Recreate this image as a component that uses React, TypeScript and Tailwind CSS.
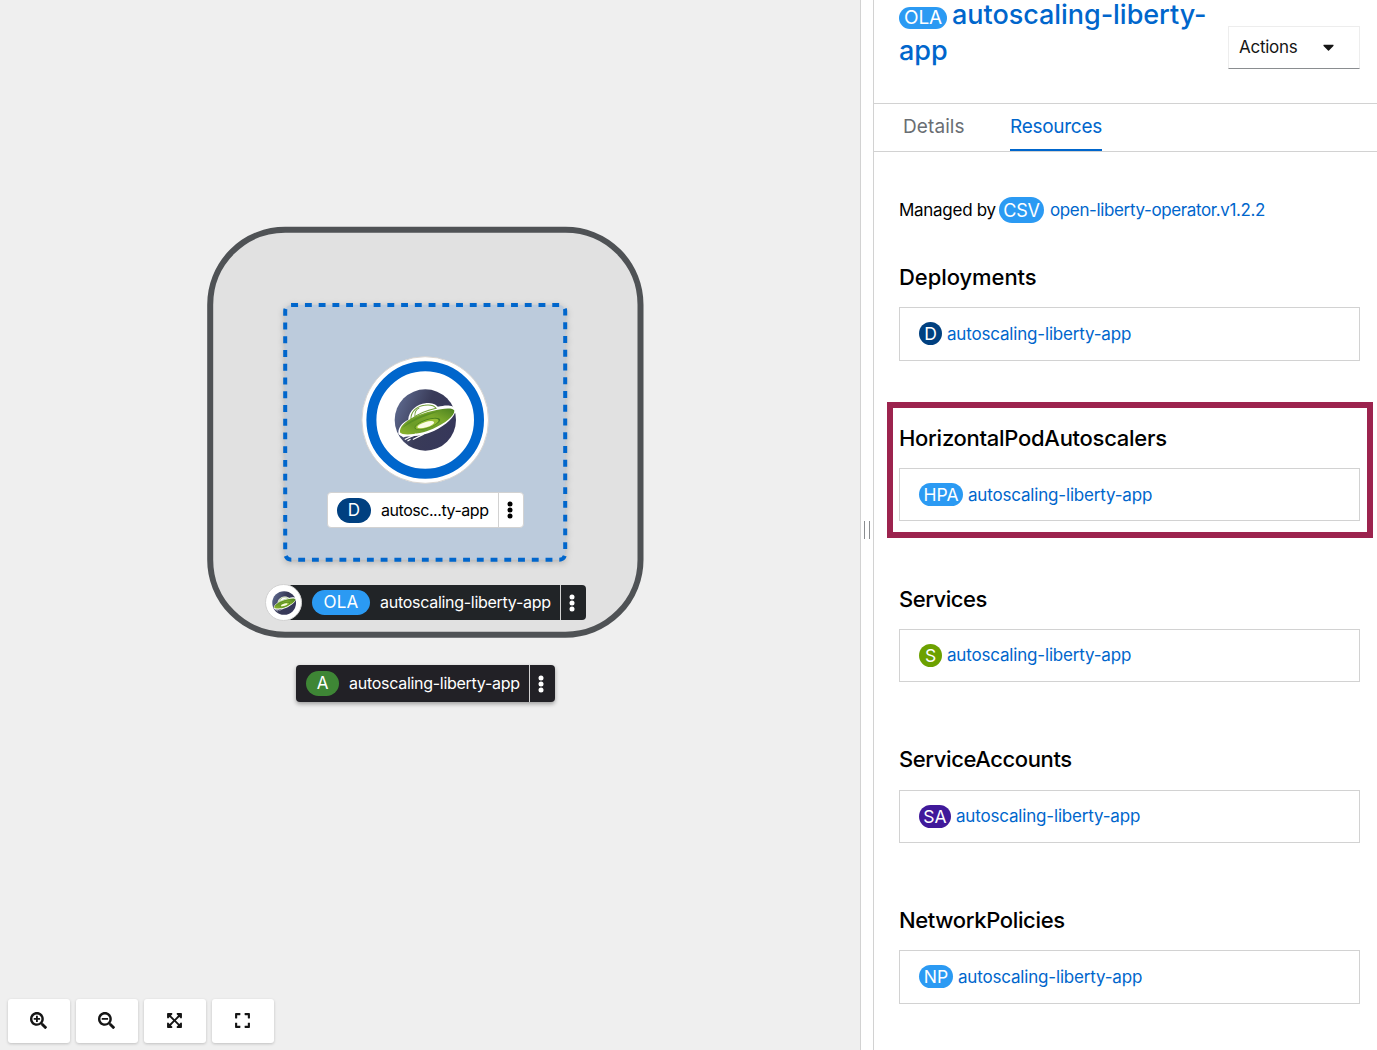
import type { ReactNode } from "react";
import { FaSearchPlus, FaSearchMinus, FaExpandArrowsAlt, FaExpand, FaCaretDown } from "react-icons/fa";

function LibertyLogo({ className }: { className: string }) {
  return (
    <svg viewBox="118 118 184 184" className={className}>
      <defs>
        <linearGradient id="space" x1="0" y1="0.2" x2="1" y2="0.6">
          <stop offset="0" stopColor="#5f6b90" />
          <stop offset="0.5" stopColor="#393b58" />
          <stop offset="1" stopColor="#36375a" />
        </linearGradient>
        <linearGradient id="hull" x1="0" y1="1" x2="1" y2="0">
          <stop offset="0" stopColor="#8db52f" />
          <stop offset="0.3" stopColor="#6b9c28" />
          <stop offset="0.65" stopColor="#7aa82c" />
          <stop offset="1" stopColor="#4a801f" />
        </linearGradient>
      </defs>
      <circle cx="211" cy="210" r="91" fill="url(#space)" />
      <path d="M132 252L150 254 172 252 146 262Z" fill="#fff" />
      <path d="M131 251C129 232 145 216 160 210C162 180 188 162 211 160C229 159 243 164 248 171C270 165 295 164 300 178C304 196 274 225 238 242C199 260 141 265 131 251Z" fill="#fff" />
      <path d="M168 208C168 184 188 168 209 166C225 164 238 168 243 175C215 181 187 193 168 208Z" fill="#fff" stroke="#719e38" strokeWidth="3" />
      <path d="M180 199C179 185 185 178 193 174" fill="none" stroke="#719e38" strokeWidth="3" />
      <path d="M136 247C133 231 151 213 180 200C224 181 291 167 297 182C299 197 270 220 234 236C196 253 143 258 136 247Z" fill="url(#hull)" />
      <path d="M142 234C157 215 200 190 252 183C225 194 180 207 142 234Z" fill="#5a8f24" />
      <ellipse cx="217" cy="221" rx="40" ry="13" transform="rotate(-19 217 221)" fill="#4a801f" />
      <ellipse cx="216" cy="222" rx="36" ry="11" transform="rotate(-19 216 222)" fill="#98bf36" />
      <ellipse cx="212" cy="224" rx="26" ry="8" transform="rotate(-17 212 224)" fill="#fbfce5" />
      <path d="M150 268L184 252M158 272L167 267M174 268L206 252" stroke="#fff" strokeWidth="3.5" />
    </svg>
  );
}

function Kebab({ className = "mr-[2px]" }: { className?: string }) {
  return (
    <svg viewBox="0 0 6 18" className={`h-[18px] w-[6px] ${className}`} fill="currentColor">
      <circle cx="3" cy="3" r="2.5" />
      <circle cx="3" cy="9" r="2.5" />
      <circle cx="3" cy="15" r="2.5" />
    </svg>
  );
}

function ToolButton({ label, children }: { label: string; children: ReactNode }) {
  return (
    <button
      aria-label={label}
      className="flex h-11 w-[62px] items-center justify-center rounded-[3px] bg-white pb-px pr-px text-[17px] text-[#151515] shadow-[0_1px_3px_rgba(0,0,0,0.2)]"
    >
      {children}
    </button>
  );
}

function Topology() {
  return (
    <main className="relative h-full w-[860px] shrink-0 overflow-hidden bg-[#efefef]">
      <svg viewBox="0 0 860 1050" className="absolute inset-0 h-full w-full">
        <rect x="210.2" y="229.7" width="430.3" height="405" rx="75" fill="#e1e1e1" stroke="#4f5255" strokeWidth="6" />
        <rect
          x="285.2"
          y="305"
          width="280"
          height="254.7"
          rx="6"
          fill="#bccbdc"
          stroke="#0066cc"
          strokeWidth="4"
          strokeDasharray="6.87 6.87"
          className="drop-shadow-[0_2px_3px_rgba(0,0,0,0.2)]"
        />
        <circle cx="425.2" cy="420" r="63.3" fill="#fff" stroke="#d8d5d2" strokeWidth="1" />
        <circle cx="425.2" cy="420" r="53.8" fill="#fff" stroke="#0066cc" strokeWidth="10" />
      </svg>
      <LibertyLogo className="absolute left-[394px] top-[389px] h-[62px] w-[62px]" />

      <div className="absolute left-[327px] top-[492px] flex h-9 w-[197px] items-center rounded-[4px] border border-[#d2d2d2] bg-white text-black">
        <span className="ml-[9px] flex h-[25px] w-[34px] items-center justify-center rounded-full bg-[#004080] pt-px text-[17px] text-white">D</span>
        <span className="ml-[10px] w-[117px] whitespace-nowrap text-[16px] tracking-[-0.46px]">autosc...ty-app</span>
        <span className="flex h-full flex-1 items-center justify-center border-l border-[#d2d2d2]">
          <Kebab />
        </span>
      </div>

      <div className="absolute left-[284px] top-[585px] flex h-[35px] w-[302px] items-center rounded-[4px] bg-[#212427] text-white">
        <span className="ml-[28px] flex h-[25px] w-[58px] items-center justify-center rounded-full bg-[#2b9af3] pt-px text-[17px] tracking-[0.3px]">OLA</span>
        <span className="ml-[10px] w-[180px] whitespace-nowrap pb-[2px] text-[16px] tracking-[-0.28px]">autoscaling-liberty-app</span>
        <span className="flex h-full flex-1 items-center justify-center border-l border-[#d2d2d2]">
          <Kebab className="mr-[3px]" />
        </span>
      </div>
      <div className="absolute left-[265px] top-[584px] flex h-[37px] w-[37px] items-center justify-center rounded-full border border-[#d2d2d2] bg-white">
        <LibertyLogo className="h-6 w-6" />
      </div>

      <div className="absolute left-[296px] top-[665px] flex h-[37px] w-[259px] items-center rounded-[4px] bg-[#222126] text-white shadow-[0_2px_4px_rgba(0,0,0,0.35)]">
        <span className="ml-[10px] flex h-[25px] w-[33px] items-center justify-center rounded-full bg-[#3e8635] pt-px text-[17px]">A</span>
        <span className="ml-[10px] w-[180px] whitespace-nowrap pb-[2px] text-[16px] tracking-[-0.28px]">autoscaling-liberty-app</span>
        <span className="flex h-full flex-1 items-center justify-center border-l border-[#d2d2d2]">
          <Kebab className="mr-[3px]" />
        </span>
      </div>

      <div className="absolute left-2 top-[999px] flex gap-[6px]">
        <ToolButton label="Zoom in"><FaSearchPlus /></ToolButton>
        <ToolButton label="Zoom out"><FaSearchMinus /></ToolButton>
        <ToolButton label="Fit to screen"><FaExpandArrowsAlt /></ToolButton>
        <ToolButton label="Reset view"><FaExpand /></ToolButton>
      </div>
    </main>
  );
}

const resources = [
  { title: "Deployments", titleClass: "tracking-[-0.06px]", badge: "D", badgeClass: "w-[23px] bg-[#004080]" },
  { title: "HorizontalPodAutoscalers", titleClass: "tracking-[-0.28px]", badge: "HPA", badgeClass: "w-[44px] bg-[#2b9af3]", highlighted: true },
  { title: "Services", titleClass: "tracking-[-0.48px]", badge: "S", badgeClass: "w-[23px] bg-[#6ca100]" },
  { title: "ServiceAccounts", titleClass: "tracking-[-0.4px]", badge: "SA", badgeClass: "w-[32px] bg-[#40199a]" },
  { title: "NetworkPolicies", titleClass: "tracking-[-0.36px]", badge: "NP", badgeClass: "w-[34px] bg-[#2b9af3]" },
];

function SidePanel() {
  return (
    <aside className="flex h-full min-w-0 flex-1 flex-col bg-white">
      <header className="flex h-[104px] shrink-0 items-start justify-between border-b border-[#d2d2d2] pl-[25px] pr-[17px]">
        <h1 className="text-[27px] font-medium text-[#0066cc]">
          <span className="flex h-[33px] items-start whitespace-nowrap leading-[30px] tracking-[-0.04px]">
            <span className="mr-[5px] mt-[7px] flex h-[22px] w-12 items-center justify-center rounded-full bg-[#2b9af3] text-[19px] font-normal tracking-[-0.1px] text-white">OLA</span>
            <span>autoscaling-liberty-</span>
          </span>
          <span className="block leading-9">app</span>
        </h1>
        <button className="mt-[26px] flex h-[43px] w-[132px] items-center border border-[#ededed] border-b-[#8a8d90] pl-[10px] text-[17px] tracking-[-0.25px] text-[#151515]">
          <span className="w-[84px] text-left">Actions</span>
          <FaCaretDown className="mb-[2px] h-[18px] w-[11px]" preserveAspectRatio="none" />
        </button>
      </header>
      <nav className="flex h-12 shrink-0 items-start border-b border-[#d2d2d2] pl-[29px] text-[19px]">
        <span className="w-[107px] pt-[9px] leading-7 tracking-[0.1px] text-[#6a6e73]">Details</span>
        <span className="h-[47px] w-[92px] whitespace-nowrap border-b-2 border-[#0066cc] pt-[9px] leading-7 tracking-[-0.28px] text-[#0066cc]">Resources</span>
      </nav>
      <p className="ml-[25px] mt-[45px] flex h-[26px] shrink-0 items-center whitespace-nowrap text-[17px] text-black">
        <span className="w-[100px] pt-[2px] tracking-[-0.28px]">Managed by</span>
        <span className="mr-[6px] flex h-[26px] w-[45px] items-center justify-center rounded-full bg-[#2b9af3] pt-px text-[18px] tracking-[-0.2px] text-white">CSV</span>
        <a className="pt-[2px] tracking-[-0.37px] text-[#0066cc]">open-liberty-operator.v1.2.2</a>
      </p>
      <div className="mt-[34.4px] flex flex-col">
        {resources.map((r) => (
          <section key={r.title} className="relative h-[160.75px] shrink-0 pl-[25px] pr-[17px]">
            {r.highlighted && <div className="absolute left-[13px] right-[4px] top-[-16px] h-[136px] border-[6px] border-[#9c234e]" />}
            <h2 className={`h-[50px] whitespace-nowrap pt-[4.7px] text-[22px] font-medium leading-[30px] text-black ${r.titleClass}`}>{r.title}</h2>
            <div className="flex h-[53.2px] items-center border border-[#d2d2d2] pl-[19px] text-[17px]">
              <span className={`mr-[5px] flex h-[23px] items-center justify-center rounded-full pt-px text-[17.5px] text-white ${r.badgeClass}`}>{r.badge}</span>
              <a className="whitespace-nowrap pt-[1.5px] tracking-[-0.18px] text-[#0066cc]">autoscaling-liberty-app</a>
            </div>
          </section>
        ))}
      </div>
    </aside>
  );
}

export default function App() {
  return (
    <div className="flex h-[1050px] w-full overflow-hidden bg-white font-['Inter',sans-serif]">
      <Topology />
      <div className="flex w-[14px] shrink-0 items-center justify-center gap-1 border-x border-[#d2d2d2] bg-white pt-[10px]">
        <i className="h-[18px] w-px bg-[#8a8d90]" />
        <i className="h-[18px] w-px bg-[#8a8d90]" />
      </div>
      <SidePanel />
    </div>
  );
}
